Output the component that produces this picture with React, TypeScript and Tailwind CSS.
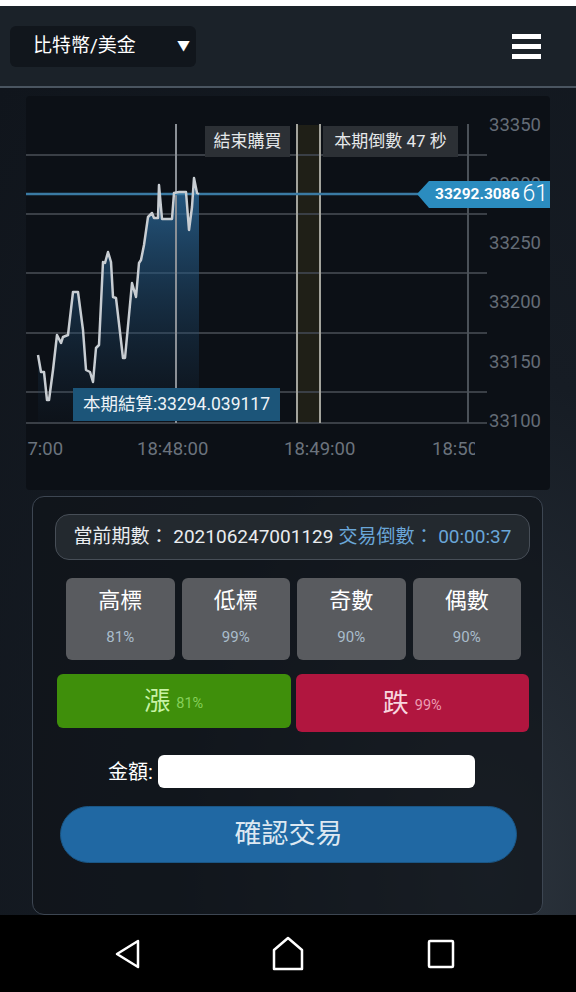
import { useState } from "react";

const pricePts: [number, number][] = [
  [38, 355], [41, 372], [44, 372], [47, 400], [49, 400], [53, 370], [57, 335], [61, 343],
  [63, 337], [68, 335], [73, 292], [78, 292], [83, 330], [86, 370], [90, 372], [93, 382],
  [96, 348], [99, 345], [103, 262], [105, 263], [108, 252], [111, 262], [113, 297], [116, 298],
  [123, 358], [125, 358], [132, 283], [136, 297], [139, 263], [141, 260], [144, 245], [148, 217],
  [152, 213], [154, 218], [158, 218], [159, 185], [162, 219], [172, 219], [174, 193], [179, 192],
  [186, 192], [189, 230], [192, 207], [194, 178], [197, 193], [199, 194],
];

const gridY = [155, 214, 273, 333, 392, 423];

const yLabels: [string, number][] = [
  ["33350", 131],
  ["33300", 190],
  ["33250", 249],
  ["33200", 308],
  ["33150", 368],
  ["33100", 427],
];

const xLabels: [string, number][] = [
  ["17:00", 17],
  ["18:48:00", 137],
  ["18:49:00", 284],
  ["18:50:00", 432],
];

const options = [
  { name: "高標", pct: "81%" },
  { name: "低標", pct: "99%" },
  { name: "奇數", pct: "90%" },
  { name: "偶數", pct: "90%" },
];

const font = { fontFamily: "Roboto, 'Noto Sans CJK TC', sans-serif" };

function PriceChart() {
  const line = pricePts.map(([x, y]) => `${x},${y}`).join(" ");
  const area = `M38,423 L${line.replace(/ /g, " L")} L199,423 Z`;

  return (
    <div className="relative mx-[26px] mt-[8px] h-[394px] overflow-hidden rounded-[4px] bg-[#0c1016]">
      <svg className="absolute inset-0" width="526" height="394" viewBox="26 96 526 394">
        <defs>
          <linearGradient id="fill" x1="0" y1="0" x2="0" y2="1">
            <stop offset="0" stopColor="#2b6a9c" stopOpacity="0.85" />
            <stop offset="1" stopColor="#1a3a58" stopOpacity="0.05" />
          </linearGradient>
          <clipPath id="xclip">
            <rect x="26" y="430" width="449" height="40" />
          </clipPath>
        </defs>

        {/* dark band between the two deadline lines */}
        <rect x="298" y="125" width="22" height="298" fill="#1f1f17" />

        {gridY.map((y) => (
          <line key={y} x1="26" x2="487" y1={y} y2={y} stroke="#3a3f46" strokeWidth="2" />
        ))}

        <path d={area} fill="url(#fill)" />

        <line x1="176" x2="176" y1="124" y2="423" stroke="#8b9096" strokeWidth="2" />
        <line x1="297" x2="297" y1="124" y2="423" stroke="#a3a39c" strokeWidth="2" />
        <line x1="320" x2="320" y1="124" y2="423" stroke="#a3a39c" strokeWidth="2" />
        <line x1="468" x2="468" y1="124" y2="423" stroke="#4b5158" strokeWidth="2" />

        <line x1="26" x2="420" y1="194" y2="194" stroke="#3a7aa3" strokeWidth="2.5" />

        <polyline points={line} fill="none" stroke="#c8cdd2" strokeWidth="2.5" strokeLinejoin="round" />

        {yLabels.map(([t, y]) => (
          <text key={t} x="489" y={y} fill="#646c76" fontSize="18.5" fontFamily="Roboto, sans-serif">
            {t}
          </text>
        ))}
        <g clipPath="url(#xclip)">
          {xLabels.map(([t, x]) => (
            <text key={t} x={x} y="455" fill="#6b737d" fontSize="18.5" fontFamily="Roboto, sans-serif">
              {t}
            </text>
          ))}
        </g>

        <polygon points="417,194 429,181 552,181 552,208 429,208" fill="#2b8cbf" />
      </svg>

      {/* overlays */}
      <div className="absolute left-[179px] top-[30px] flex h-[31px] w-[85px] items-center justify-center bg-[#2c3035] text-[17px] text-[#e6e8ea]">
        結束購買
      </div>
      <div className="absolute left-[297px] top-[30px] flex h-[31px] w-[135px] items-center justify-center bg-[#2c3035] text-[17px] text-[#e6e8ea]">
        本期倒數 47 秒
      </div>
      <div className="absolute left-[47px] top-[292px] flex h-[33px] w-[207px] items-center justify-center bg-[#1c5579] text-[17.5px] text-[#eef3f7]">
        本期結算:33294.039117
      </div>
      <div className="absolute left-[409px] top-[85px] flex h-[27px] items-center">
        <span className="text-[15.5px] font-bold text-white">33292.3086</span>
        <span className="ml-[3px] text-[23px] font-light text-white">61</span>
      </div>
    </div>
  );
}

function TradePanel() {
  const [amount, setAmount] = useState("");

  return (
    <div className="mx-[32px] mt-[6px] flex h-[419px] w-[511px] flex-col rounded-[12px] border border-[#3d4652] bg-[#0f141a]/70">
      <div className="ml-[22px] mt-[17px] flex h-[46px] w-[475px] items-center justify-center rounded-[14px] border border-[#474e57] bg-[#23292f] text-[19px]">
        <span className="text-[#e9ecef]">當前期數： 202106247001129</span>
        <span className="ml-[5px] text-[#6aa6d8]">交易倒數： 00:00:37</span>
      </div>

      <div className="ml-[33px] mt-[18px] grid w-[455px] grid-cols-4 gap-[7px]">
        {options.map((o) => (
          <div key={o.name} className="flex h-[82px] flex-col items-center rounded-[6px] bg-[#595b5f]">
            <span className="mt-[8px] text-[22px] leading-[30px] text-white">{o.name}</span>
            <span className="mt-[11px] text-[15px] leading-[20px] text-[#a9bdcc]">{o.pct}</span>
          </div>
        ))}
      </div>

      <div className="ml-[24px] mt-[14px] flex w-[472px] items-start gap-[5px]">
        <button className="flex h-[54px] flex-1 items-center justify-center rounded-[6px] bg-[#3f8f0b]">
          <span className="text-[26px] text-[#c9f3a6]">漲</span>
          <span className="ml-[6px] mt-[5px] text-[14.5px] text-[#86d05a]">81%</span>
        </button>
        <button className="flex h-[58px] flex-1 items-center justify-center rounded-[6px] bg-[#b1163f]">
          <span className="text-[26px] text-[#f8d6df]">跌</span>
          <span className="ml-[6px] mt-[5px] text-[14.5px] text-[#ec9db3]">99%</span>
        </button>
      </div>

      <div className="ml-[75px] mt-[23px] flex items-center gap-[5px]">
        <span className="text-[20px] text-white">金額:</span>
        <input
          value={amount}
          onChange={(e) => setAmount(e.target.value)}
          className="h-[33px] w-[317px] rounded-[6px] bg-white px-2 text-black outline-none"
        />
      </div>

      <button className="ml-[27px] mt-[18px] flex h-[57px] w-[457px] items-center justify-center rounded-full border border-[#1a5685] bg-[#2068a3] text-[27px] text-[#dde8f2]">
        確認交易
      </button>
    </div>
  );
}

export default function App() {
  return (
    <div className="flex h-[992px] w-[576px] flex-col overflow-hidden bg-[#121820]" style={font}>
      <div className="h-[6px] bg-white" />

      <header className="flex h-[82px] items-center justify-between border-b-2 border-[#4a5560] bg-[#1b2229] pl-[10px] pr-[35px]">
        <div className="flex h-[41px] w-[186px] items-center justify-between rounded-[6px] bg-[#11161c] pl-[23px] pr-[6px]">
          <span className="text-[19px] text-white">比特幣/美金</span>
          <span className="text-[13px] text-white">▼</span>
        </div>
        <div className="flex h-[25px] w-[29px] flex-col justify-between">
          <div className="h-[5px] bg-white" />
          <div className="h-[5px] bg-white" />
          <div className="h-[5px] bg-white" />
        </div>
      </header>

      <main className="flex-1 bg-[radial-gradient(ellipse_at_85%_95%,#2c343d_0%,#161c24_45%,#10151c_100%)]">
        <PriceChart />
        <TradePanel />
      </main>

      <nav className="flex h-[77px] items-center bg-black pl-[113px]">
        <svg width="30" height="32" viewBox="0 0 30 32" fill="none" stroke="white" strokeWidth="2.5" strokeLinejoin="round">
          <path d="M25 3 L4 16 L25 29 Z" />
        </svg>
        <svg className="ml-[129px]" width="32" height="36" viewBox="0 0 32 36" fill="none" stroke="white" strokeWidth="2.5" strokeLinejoin="round">
          <path d="M16 2 L30 14 L30 33 L2 33 L2 14 Z" />
        </svg>
        <svg className="ml-[123px]" width="28" height="30" viewBox="0 0 28 30" fill="none" stroke="white" strokeWidth="2.5" strokeLinejoin="round">
          <rect x="2" y="2" width="24" height="26" rx="1" />
        </svg>
      </nav>
    </div>
  );
}
